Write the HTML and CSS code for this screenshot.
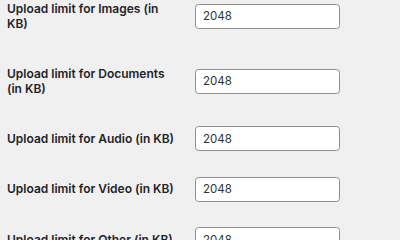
FILE: index.html
```html
<!DOCTYPE html>
<html>
<head>
<meta charset="utf-8">
<link rel="stylesheet" href="styles.css">
</head>
<body>
<form class="form">
  <div class="row two">
    <label class="lbl" for="f1">Upload limit for Images (in KB)</label>
    <div class="field"><input id="f1" class="input" type="text" value="2048"></div>
  </div>
  <div class="row two">
    <label class="lbl" for="f2">Upload limit for Documents (in KB)</label>
    <div class="field"><input id="f2" class="input" type="text" value="2048"></div>
  </div>
  <div class="row">
    <label class="lbl" for="f3">Upload limit for Audio (in KB)</label>
    <div class="field"><input id="f3" class="input" type="text" value="2048"></div>
  </div>
  <div class="row">
    <label class="lbl" for="f4">Upload limit for Video (in KB)</label>
    <div class="field"><input id="f4" class="input" type="text" value="2048"></div>
  </div>
  <div class="row">
    <label class="lbl" for="f5">Upload limit for Other (in KB)</label>
    <div class="field"><input id="f5" class="input" type="text" value="2048"></div>
  </div>
</form>
</body>
</html>
```
FILE: styles.css
```css
html, body {
  margin: 0;
  padding: 0;
  background: #f0f0f1;
  overflow: hidden;
}
body {
  font-family: Inter, "Liberation Sans", sans-serif;
  color: #1d2327;
}
.form {
  margin-top: -16.5px;
  padding-left: 7px;
  display: flex;
  flex-direction: column;
}
.row {
  display: grid;
  grid-template-columns: 176px 157px;
}
.lbl {
  font-size: 12px;
  font-weight: 600;
  line-height: 15.5px;
  padding: 17px 8px 17px 0;
  align-self: start;
}
.field {
  padding: 12.75px 0 12.75px 12px;
  display: flex;
  align-items: center;
  align-self: stretch;
}
.input {
  box-sizing: border-box;
  width: 145px;
  height: 25px;
  margin: 0;
  padding: 0 7px;
  border: 1px solid #8c8f94;
  border-radius: 3.5px;
  background: #fff;
  font-family: Inter, "Liberation Sans", sans-serif;
  font-size: 11.5px;
  color: #2c3338;
  outline: none;
}
```
